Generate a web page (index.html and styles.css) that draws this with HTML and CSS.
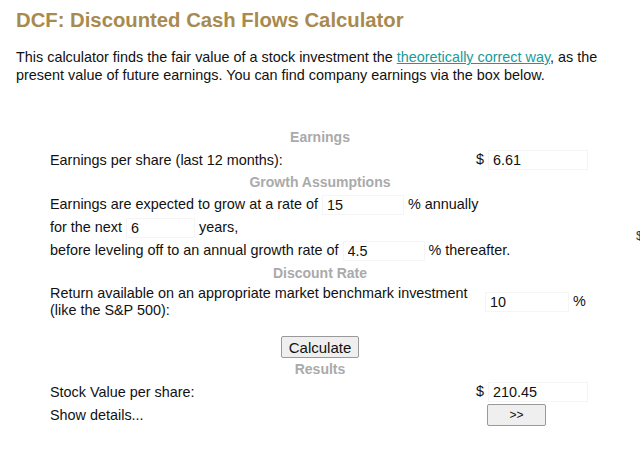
FILE: index.html
```html
<!DOCTYPE html>
<html lang="en">
<head>
  <meta charset="UTF-8">
  <title>DCF: Discounted Cash Flows Calculator</title>
  <link rel="stylesheet" href="styles.css">
</head>
<body>

<div id="page">
  <h1>DCF: Discounted Cash Flows Calculator</h1>
  <p class="intro">This calculator finds the fair value of a stock investment the <a href="#">theoretically correct way</a>, as the present value of future earnings. You can find company earnings via the box below.</p>

  <div id="calc">
    <div class="section">Earnings</div>
    <div class="row">
      <div class="label">Earnings per share (last 12 months):</div>
      <div class="value">$ <input type="text" class="wide" value="6.61"></div>
    </div>

    <div class="section">Growth Assumptions</div>
    <div class="row">
      <div class="label">Earnings are expected to grow at a rate of <input type="text" class="mid" value="15"> % annually</div>
    </div>
    <div class="row">
      <div class="label">for the next <input type="text" class="short" value="6"> years,</div>
    </div>
    <div class="row">
      <div class="label">before leveling off to an annual growth rate of <input type="text" class="mid" value="4.5"> % thereafter.</div>
    </div>

    <div class="section">Discount Rate</div>
    <div class="row tall">
      <div class="label">Return available on an appropriate market benchmark investment<br>(like the S&amp;P 500):</div>
      <div class="value"><input type="text" class="pct" value="10"> %</div>
    </div>

    <div class="actions">
      <button class="btn" onclick="calculate()">Calculate</button>
    </div>

    <div class="section">Results</div>
    <div class="row">
      <div class="label">Stock Value per share:</div>
      <div class="value">$ <input type="text" class="wide" id="result" value="210.45"></div>
    </div>
    <div class="row">
      <div class="label">Show details...</div>
      <div class="value"><button class="btn more">&gt;&gt;</button></div>
    </div>
  </div>
</div>

<span class="edge">$</span>

<script>
  function calculate() {
    let inputs = document.querySelectorAll('#calc input');
    let eps = parseFloat(inputs[0].value);
    let growth = parseFloat(inputs[1].value) / 100;
    let years = parseInt(inputs[2].value);
    let terminal = parseFloat(inputs[3].value) / 100;
    let discount = parseFloat(inputs[4].value) / 100;

    let value = 0;
    let earnings = eps;
    for (let i = 1; i <= years; i++) {
      earnings *= 1 + growth;
      value += earnings / Math.pow(1 + discount, i);
    }
    // Wert nach der Wachstumsphase (ewige Rente)
    let tail = earnings * (1 + terminal) / (discount - terminal);
    value += tail / Math.pow(1 + discount, years);

    document.getElementById('result').value = value.toFixed(2);
  }
</script>

</body>
</html>
```

FILE: styles.css
```css
body {
  margin: 0;
  font-family: "Liberation Sans", Arial, sans-serif;
  color: #111;
  background: #fff;
  overflow: hidden;
}

#page {
  padding: 9px 16px;
}

h1 {
  margin: 0 0 16px;
  font-size: 20.3px;
  line-height: 23px;
  color: #a88a4e;
}

.intro {
  margin: 0;
  font-size: 14.4px;
  line-height: 18px;
}

.intro a {
  color: #1a9a9a;
}

#calc {
  margin: 42px 0 0 26px;
  width: 556px;
  font-size: 14.4px;
}

.section {
  height: 22px;
  line-height: 22px;
  text-align: center;
  font-weight: bold;
  font-size: 14px;
  color: #aaa;
}

.row {
  display: flex;
  align-items: center;
  height: 23px;
  padding-left: 8px;
}

.row.tall {
  height: 36px;
  line-height: 17px;
}

.label {
  flex: 1;
  white-space: nowrap;
}

.value {
  width: 122px;
  padding-left: 5px;
}

input {
  font: inherit;
  color: #111;
  height: 20px;
  padding: 0 4px;
  border: 1px solid #f5f5f5;
  box-sizing: border-box;
  vertical-align: middle;
}

input.wide { width: 100px; }
input.mid { width: 82px; }
input.short { width: 69px; }
input.pct { width: 84px; margin-left: 9px; }

.actions {
  height: 38px;
  display: flex;
  align-items: flex-end;
  justify-content: center;
}

.btn {
  font: inherit;
  font-size: 15px;
  color: #111;
  background: #efefef;
  border: 1px solid #999;
  border-radius: 2px;
  padding: 1px 7px;
  height: 22px;
}

.btn.more {
  width: 59px;
  margin-left: 11px;
  font-size: 12px;
}

.edge {
  position: absolute;
  left: 636px;
  top: 228px;
  font-size: 13px;
  color: #333;
}
```
